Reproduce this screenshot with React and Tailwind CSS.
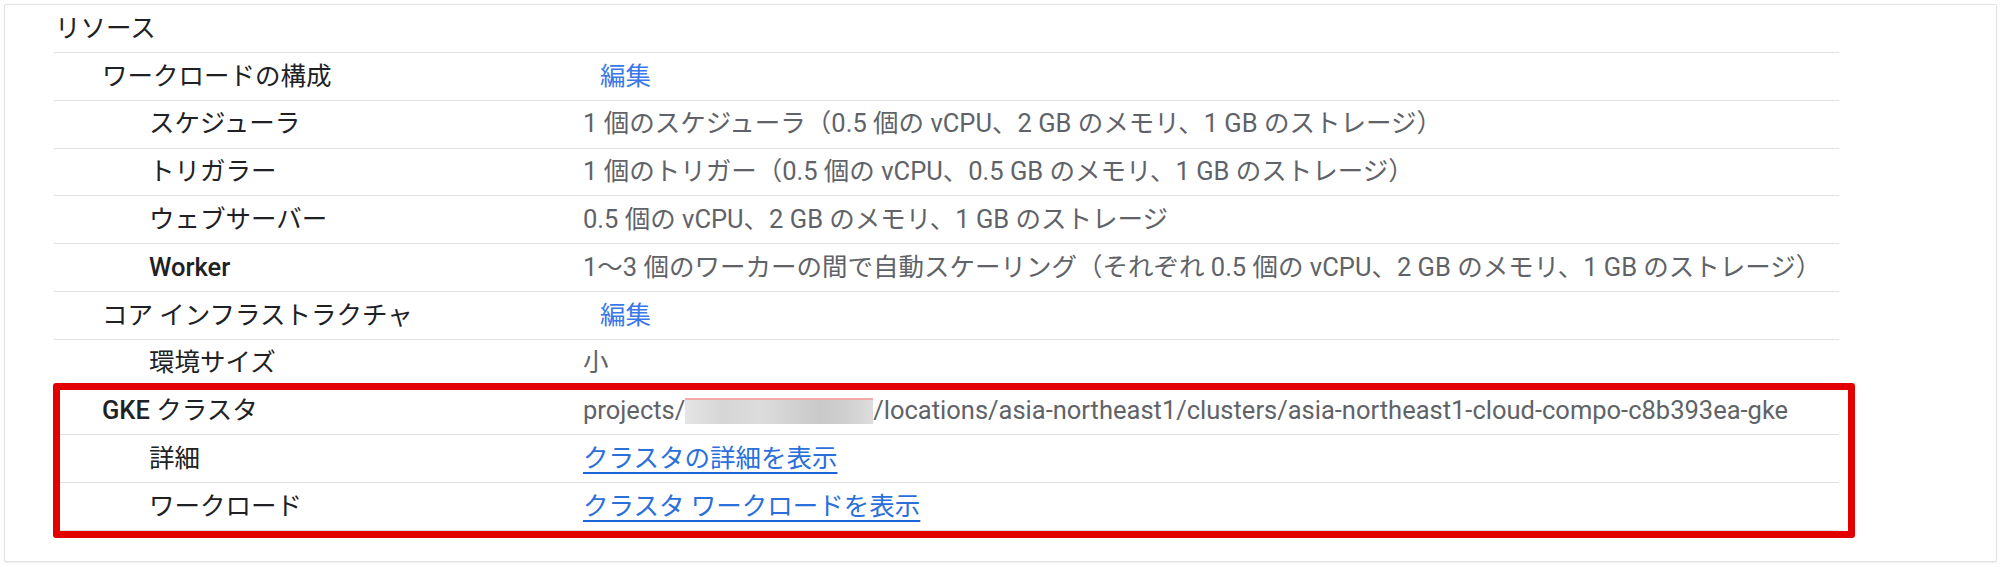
const ROWS = [
  { label: 'ワークロードの構成', level: 1, edit: true },
  { label: 'スケジューラ', level: 2, value: '1 個のスケジューラ（0.5 個の vCPU、2 GB のメモリ、1 GB のストレージ）' },
  { label: 'トリガラー', level: 2, value: '1 個のトリガー（0.5 個の vCPU、0.5 GB のメモリ、1 GB のストレージ）' },
  { label: 'ウェブサーバー', level: 2, value: '0.5 個の vCPU、2 GB のメモリ、1 GB のストレージ' },
  { label: 'Worker', level: 2, bold: true, value: '1～3 個のワーカーの間で自動スケーリング（それぞれ 0.5 個の vCPU、2 GB のメモリ、1 GB のストレージ）' },
  { label: 'コア インフラストラクチャ', level: 1, edit: true },
  { label: '環境サイズ', level: 2, value: '小' },
  { label: 'GKE', suffix: ' クラスタ', level: 1, bold: true, path: true },
  { label: '詳細', level: 2, link: 'クラスタの詳細を表示' },
  { label: 'ワークロード', level: 2, link: 'クラスタ ワークロードを表示' },
];

function Redacted() {
  return (
    <span className="inline-block w-[188px] h-[26px] align-[-5px] border-t-2 border-[#f4a9a9] bg-[linear-gradient(90deg,#e4e4e4_0%,#d6d6d6_20%,#dcdcdc_40%,#d3d3d3_55%,#c9c9c9_72%,#cfcfcf_85%,#dddddd_100%)]" />
  );
}

function Row({ row }) {
  const pad = row.level === 1 ? 'pl-[48px]' : 'pl-[95px]';
  return (
    <div className="flex items-center h-[47.8px] border-b border-[#e0e0e0]">
      <div className={`w-[529px] shrink-0 text-[#202124] ${pad}`}>
        {row.bold ? <span className="font-medium">{row.label}</span> : row.label}
        {row.suffix}
      </div>
      <div className="flex-1 whitespace-nowrap text-[#5f6368]">
        {row.edit && <span className="pl-[17px] text-[#3b78e7]">編集</span>}
        {row.value}
        {row.path && (
          <>
            projects/<Redacted />/locations/asia-northeast1/clusters/asia-northeast1-cloud-compo-c8b393ea-gke
          </>
        )}
        {row.link && (
          <a className="text-[#2a6fdb] underline decoration-[#1a66d9] decoration-2 underline-offset-[5px]">{row.link}</a>
        )}
      </div>
    </div>
  );
}

export default function App() {
  return (
    <div className="w-[2000px] h-[567px] bg-white pt-[4px] pl-[4px] font-['Roboto','Noto_Sans_CJK_JP',sans-serif] text-[25.5px] leading-none">
      <div className="relative w-[1993px] pb-[30px] bg-white border border-[#e2e2e2] rounded-[2px] shadow-[0_1px_2px_rgba(0,0,0,0.08)]">
        <div className="ml-[49px] w-[1785px]">
          <div className="flex items-center h-[48px] pl-[1px] border-b border-[#e0e0e0] text-[#202124]">リソース</div>
          {ROWS.map((row, i) => (
            <Row key={i} row={row} />
          ))}
        </div>
        {/* highlight annotation */}
        <div className="absolute left-[48px] top-[378px] w-[1802px] h-[155px] border-[7px] border-[#e30000] rounded-[3px] pointer-events-none" />
      </div>
    </div>
  );
}
